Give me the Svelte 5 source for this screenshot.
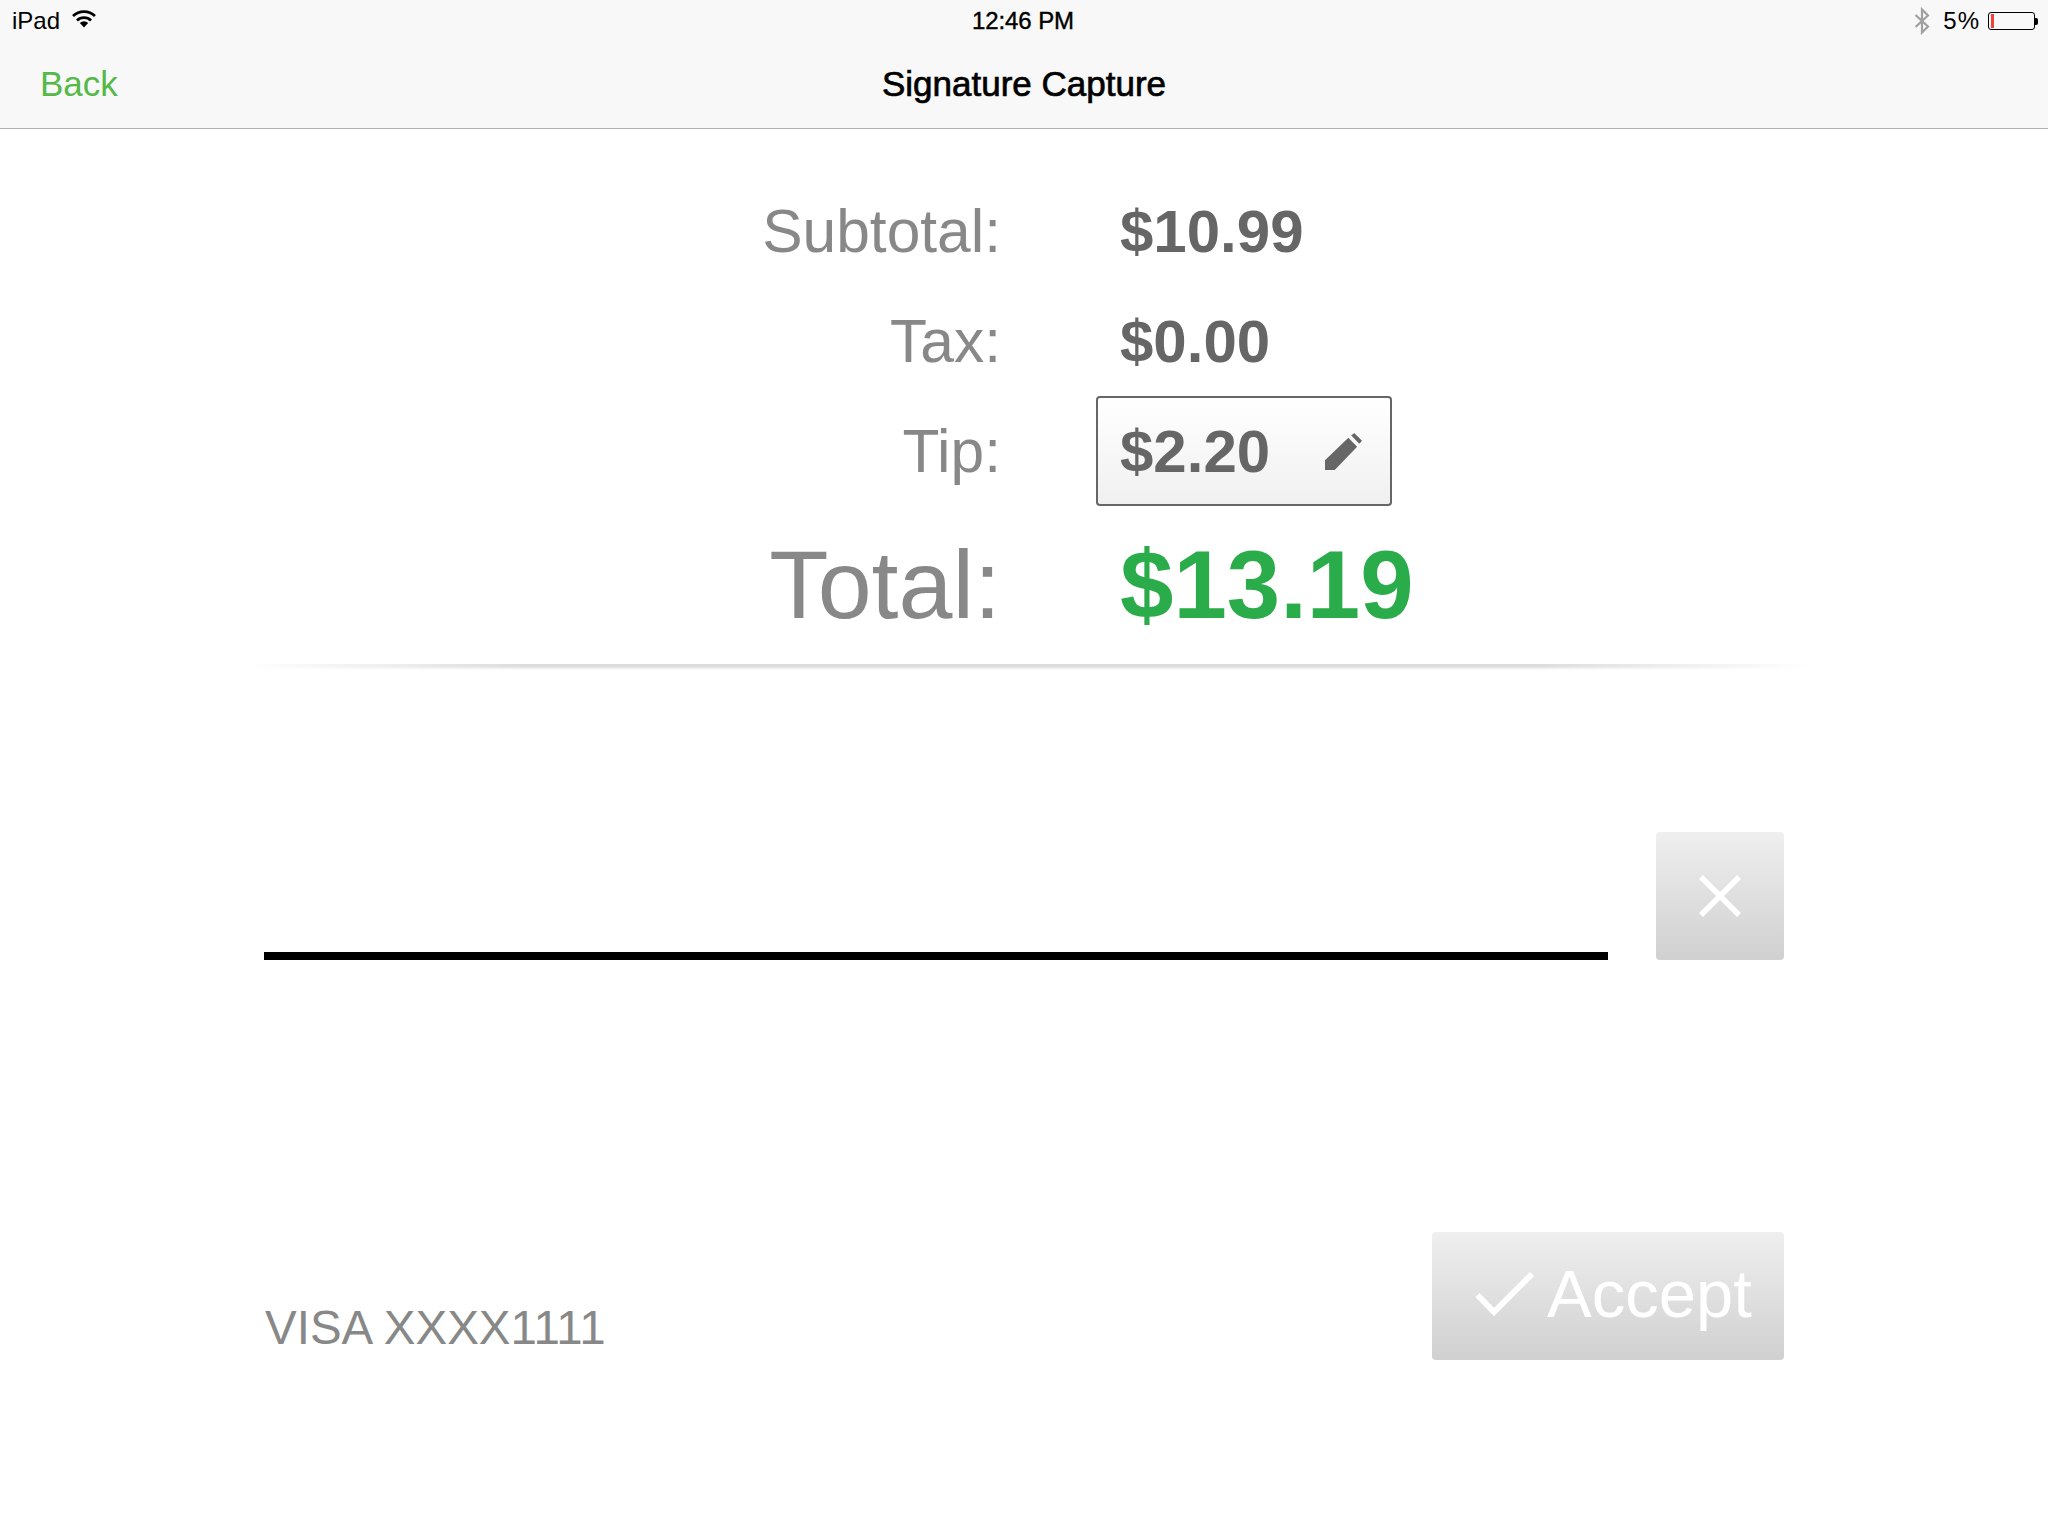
<script>
	const rows = [
		{ label: "Subtotal:", value: "$10.99" },
		{ label: "Tax:", value: "$0.00" },
	];
</script>

<div class="screen">
	<header class="top">
		<div class="status">
			<div class="status-left">
				<span>iPad</span>
				<svg class="wifi" viewBox="0 0 26 18" width="26" height="18">
					<path d="M13 17.500 8.800 13a6 6 0 0 1 8.400 0Z" fill="#000" />
					<path d="M6 10.400a10 10 0 0 1 14 0" fill="none" stroke="#000" stroke-width="2.800" />
					<path d="M2 6a15.800 15.800 0 0 1 22 0" fill="none" stroke="#000" stroke-width="2.800" />
				</svg>
			</div>
			<span class="clock">12:46 PM</span>
			<div class="status-right">
				<svg class="bt" viewBox="0 0 16 28" width="16" height="28">
					<path d="M1.500 8 14 19.500 8 25.500V2.500L14 8.500 1.500 20" fill="none" stroke="#a0a0a0" stroke-width="2.200" />
				</svg>
				<span class="pct">5%</span>
				<div class="battery"><span class="charge"></span></div>
				<span class="nub"></span>
			</div>
		</div>
		<nav class="bar">
			<a class="back" href="#back">Back</a>
			<h1>Signature Capture</h1>
		</nav>
	</header>

	<main class="content">
		<section class="summary">
			{#each rows as row}
				<div class="row">
					<span class="label">{row.label}</span>
					<span class="value">{row.value}</span>
				</div>
			{/each}
			<div class="row">
				<span class="label">Tip:</span>
				<button class="tip">
					<span class="value">$2.20</span>
					<svg viewBox="0 0 38 38" width="37" height="37">
						<path d="M0 38V28L24 5l9 9L10 38Z" fill="#666" />
						<path d="M27 2.600 30 0l8 8-2.800 3Z" fill="#666" />
					</svg>
				</button>
			</div>
			<div class="row total">
				<span class="label">Total:</span>
				<span class="value">$13.19</span>
			</div>
		</section>

		<div class="divider"></div>

		<section class="signature">
			<div class="line"></div>
			<button class="clear" aria-label="Clear">
				<svg viewBox="0 0 42 42" width="42" height="42">
					<path d="M2 2 40 40M40 2 2 40" stroke="#fff" stroke-width="5.500" fill="none" />
				</svg>
			</button>
		</section>

		<section class="foot">
			<span class="card">VISA XXXX1111</span>
			<button class="accept">
				<svg viewBox="0 0 60 48" width="60" height="48">
					<path d="M2.500 25 19 42 57 4" stroke="#fff" stroke-width="6" fill="none" />
				</svg>
				<span class="accept-text">Accept</span>
			</button>
		</section>
	</main>
</div>

<style>
	:global(body) {
		margin: 0;
		background: #fff;
	}

	.screen {
		width: 2048px;
		height: 1536px;
		display: flex;
		flex-direction: column;
		font-family: "Liberation Sans", Arial, sans-serif;
		overflow: hidden;
	}

	.top {
		background: #f8f8f8;
		border-bottom: 1px solid #b2b2b2;
		height: 128px;
	}

	.status {
		height: 42px;
		display: grid;
		grid-template-columns: 1fr auto 1fr;
		align-items: center;
		padding: 0 10px 0 12px;
		font-size: 24px;
		color: #000;
	}

	.status-left {
		display: flex;
		align-items: center;
		gap: 11px;
	}

	.wifi {
		margin-top: -4px;
	}

	.clock {
		font-size: 24px;
		letter-spacing: -0.1px;
		margin-left: -4px;
		-webkit-text-stroke: 0.4px #000;
	}

	.status-right {
		display: flex;
		align-items: center;
		justify-content: flex-end;
	}

	.bt {
		margin-right: 13px;
	}

	.pct {
		margin-right: 8px;
		letter-spacing: 1px;
	}

	.battery {
		width: 47px;
		height: 18px;
		border: 1px solid #000;
		border-radius: 3px;
		padding: 1px 0 1px 2px;
		box-sizing: border-box;
		display: flex;
	}

	.charge {
		width: 3px;
		background: #f0413c;
	}

	.nub {
		width: 3px;
		height: 7px;
		background: #000;
		border-radius: 0 2px 2px 0;
	}

	.bar {
		height: 86px;
		position: relative;
		display: flex;
		align-items: center;
		justify-content: center;
		padding-bottom: 2px;
		box-sizing: border-box;
	}

	.back {
		position: absolute;
		left: 40px;
		font-size: 35px;
		color: #54b948;
		text-decoration: none;
	}

	h1 {
		margin: 0;
		font-size: 35px;
		font-weight: 400;
		color: #000;
		-webkit-text-stroke: 0.7px #000;
	}

	.content {
		flex: 1;
		padding-top: 47px;
		display: flex;
		flex-direction: column;
	}

	.summary {
		display: flex;
		flex-direction: column;
	}

	.row {
		display: grid;
		grid-template-columns: 1001px auto;
		column-gap: 95px;
		align-items: center;
		height: 110px;
		justify-content: start;
	}

	.label {
		text-align: right;
		font-size: 60.500px;
		color: #888;
	}

	.value {
		font-size: 60px;
		font-weight: 700;
		color: #666;
		padding-left: 24px;
	}

	.tip {
		width: 296px;
		height: 110px;
		box-sizing: border-box;
		border: 2px solid #666;
		border-radius: 4px;
		background: linear-gradient(#fff, #f0f0f0);
		display: flex;
		align-items: center;
		justify-content: space-between;
		padding: 0 28px 0 0;
		font: inherit;
	}

	.tip .value {
		padding-left: 22px;
	}

	.total {
		height: 158px;
	}

	.total .label {
		font-size: 97px;
	}

	.total .value {
		font-size: 96px;
		color: #2bac4a;
	}

	.divider {
		height: 6px;
		margin: 0 238px 0 250px;
		background:
			linear-gradient(90deg, #fff, rgba(255, 255, 255, 0) 18%, rgba(255, 255, 255, 0) 82%, #fff),
			linear-gradient(#dcdcdc 0, #dcdcdc 40%, #fff 100%);
	}

	.signature {
		display: flex;
		align-items: flex-end;
		padding: 162px 264px 0;
		gap: 48px;
	}

	.line {
		flex: 1;
		height: 8px;
		background: #000;
	}

	.clear,
	.accept {
		border: 0;
		border-radius: 4px;
		background: linear-gradient(#efefef, #d0d0d0);
		color: #fff;
		display: flex;
		align-items: center;
		justify-content: center;
		padding: 0;
		font: inherit;
	}

	.clear {
		width: 128px;
		height: 128px;
	}

	.foot {
		display: flex;
		align-items: flex-end;
		justify-content: space-between;
		padding: 272px 264px 0 265px;
	}

	.card {
		font-size: 47.500px;
		color: #888;
		line-height: 1;
		margin-bottom: 9px;
	}

	.accept {
		width: 352px;
		height: 128px;
		font-size: 67px;
		gap: 12px;
		justify-content: flex-start;
		padding-left: 43px;
	}

	.accept svg {
		margin-top: -4px;
	}

	.accept-text {
		margin-bottom: 6px;
	}
</style>
